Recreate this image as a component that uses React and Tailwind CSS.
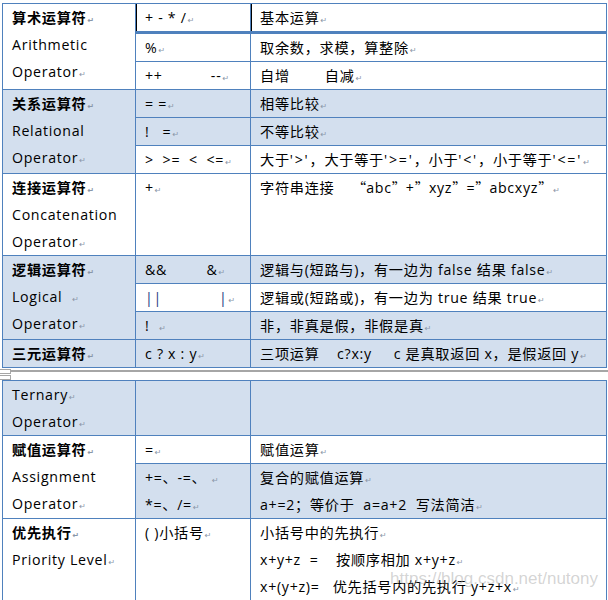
import React from "react"

function Mark() {
  return (
    <span className="ml-[1px] font-['DejaVu_Sans'] text-[8px] leading-none tracking-normal text-[#8a96a8]">↵</span>
  )
}

function L({ children, mark = true, bold = false }) {
  return (
    <div className={`h-[27px] ${bold ? "font-bold" : ""}`}>
      {children}
      {mark && <Mark />}
    </div>
  )
}

function Td({ children, blue = false, rowSpan, className = "", dot = false }) {
  return (
    <td
      rowSpan={rowSpan}
      className={`relative border border-[#4f81bd] px-[9px] py-0 align-top whitespace-pre ${
        blue ? "bg-[#d3dfee]" : "bg-white"
      } ${className}`}
    >
      {children}
      {dot && <span className="absolute right-[-4px] top-[13px] h-px w-[2px] bg-[#666]" />}
    </td>
  )
}

// full-width quotes come from the CJK font
function Q({ children }) {
  return <span className="font-['Noto_Sans_CJK_SC'] tracking-normal">{children}</span>
}

function W({ children }) {
  return <span className="tracking-[1.8px]">{children}</span>
}

function Cols() {
  return (
    <colgroup>
      <col className="w-[133px]" />
      <col className="w-[115px]" />
      <col className="w-[356px]" />
    </colgroup>
  )
}

export default function App() {
  return (
    <div
      className="relative h-[600px] w-[608px] overflow-hidden bg-white text-[14.2px] leading-[27px] tracking-[0.7px] text-black"
      style={{ fontFamily: '"Open Sans", "Noto Sans CJK SC", sans-serif' }}
    >
      <table className="ml-[2px] mt-[3px] w-[604px] table-fixed border-collapse">
        <Cols />
        <tbody>
          <tr>
            <Td rowSpan={3}>
              <L bold>算术运算符</L>
              <L mark={false}>Arithmetic</L>
              <L>Operator</L>
            </Td>
            <Td className="border-b-[3px] shadow-[inset_1px_0_0_#000]">
              <L>+ - * /</L>
            </Td>
            <Td className="border-b-[3px] shadow-[inset_1px_0_0_#000]" dot>
              <L>基本运算</L>
            </Td>
          </tr>
          <tr>
            <Td><L>%</L></Td>
            <Td dot><L>取余数，求模，算整除</L></Td>
          </tr>
          <tr>
            <Td><L>{"++           --"}</L></Td>
            <Td dot><L>{"自增        自减"}</L></Td>
          </tr>

          <tr>
            <Td rowSpan={3} blue>
              <L bold>关系运算符</L>
              <L mark={false}>Relational</L>
              <L>Operator</L>
            </Td>
            <Td blue><L>= =</L></Td>
            <Td blue dot><L>相等比较</L></Td>
          </tr>
          <tr>
            <Td blue><L>{"!   ="}</L></Td>
            <Td blue dot><L>不等比较</L></Td>
          </tr>
          <tr>
            <Td><L>{">  >=  <  <="}</L></Td>
            <Td dot>
              <L>
                大于<W>{"'>'"}</W>，大于等于<W>{"'>='"}</W>，小于<W>{"'<'"}</W>，小于等于<W>{"'<='"}</W>
              </L>
            </Td>
          </tr>

          <tr>
            <Td>
              <L bold>连接运算符</L>
              <L mark={false}>Concatenation</L>
              <L>Operator</L>
            </Td>
            <Td><L>+</L></Td>
            <Td dot>
              <L>
                {"字符串连接    "}<Q>“</Q>abc<Q>”</Q>+<Q>”</Q>xyz<Q>”</Q>=<Q>”</Q>abcxyz<Q>”</Q>
              </L>
            </Td>
          </tr>

          <tr>
            <Td rowSpan={3} blue>
              <L bold>逻辑运算符</L>
              <L>{"Logical  "}</L>
              <L>Operator</L>
            </Td>
            <Td blue><L>{"&&         &"}</L></Td>
            <Td blue dot><L>逻辑与(短路与)，有一边为 false 结果 false</L></Td>
          </tr>
          <tr>
            <Td>
              <L>
                <span className="text-[#203a80]">{"||"}</span>{"             "}<span className="text-[#203a80]">|</span>
              </L>
            </Td>
            <Td dot><L>逻辑或(短路或)，有一边为 true 结果 true</L></Td>
          </tr>
          <tr>
            <Td blue><L>{"!  "}</L></Td>
            <Td blue dot><L>非，非真是假，非假是真</L></Td>
          </tr>

          <tr>
            <Td blue><L bold>三元运算符</L></Td>
            <Td blue><L>c ? x : y</L></Td>
            <Td blue dot><L>{"三项运算    c?x:y     c 是真取返回 x，是假返回 y"}</L></Td>
          </tr>
        </tbody>
      </table>

      <div className="flex h-[12px]">
        <div className="flex w-[11px] flex-col gap-px pt-px">
          <div className="h-[5px] border border-l-0 border-[#a6a6a6]" />
          <div className="h-[5px] border border-l-0 border-[#a6a6a6]" />
        </div>
        <div className="mt-[2px] h-[2px] flex-1 bg-[#a6a6a6]" />
      </div>

      <table className="ml-[2px] w-[604px] table-fixed border-collapse">
        <Cols />
        <tbody>
          <tr>
            <Td blue>
              <L>Ternary</L>
              <L>Operator</L>
            </Td>
            <Td blue />
            <Td blue />
          </tr>

          <tr>
            <Td rowSpan={2}>
              <L bold>赋值运算符</L>
              <L mark={false}>Assignment</L>
              <L>Operator</L>
            </Td>
            <Td><L>=</L></Td>
            <Td dot><L>赋值运算</L></Td>
          </tr>
          <tr>
            <Td blue>
              <L>{"+=、-=、 "}</L>
              <L>*=、/=</L>
            </Td>
            <Td blue dot>
              <L>复合的赋值运算</L>
              <L>{"a+=2；等价于  a=a+2  写法简洁"}</L>
            </Td>
          </tr>

          <tr>
            <Td>
              <L bold>优先执行</L>
              <L>Priority Level</L>
            </Td>
            <Td><L>( )小括号</L></Td>
            <Td dot>
              <L>小括号中的先执行</L>
              <L>{"x+y+z  =    按顺序相加 x+y+z"}</L>
              <L>{"x+(y+z)=   优先括号内的先执行 y+z+x"}</L>
            </Td>
          </tr>
        </tbody>
      </table>

      <div className="absolute right-[10px] top-[569px] font-['Liberation_Sans'] text-[17px] leading-[20px] tracking-normal text-[rgba(160,160,160,0.45)]">
        https://blog.csdn.net/nutony
      </div>
    </div>
  )
}
